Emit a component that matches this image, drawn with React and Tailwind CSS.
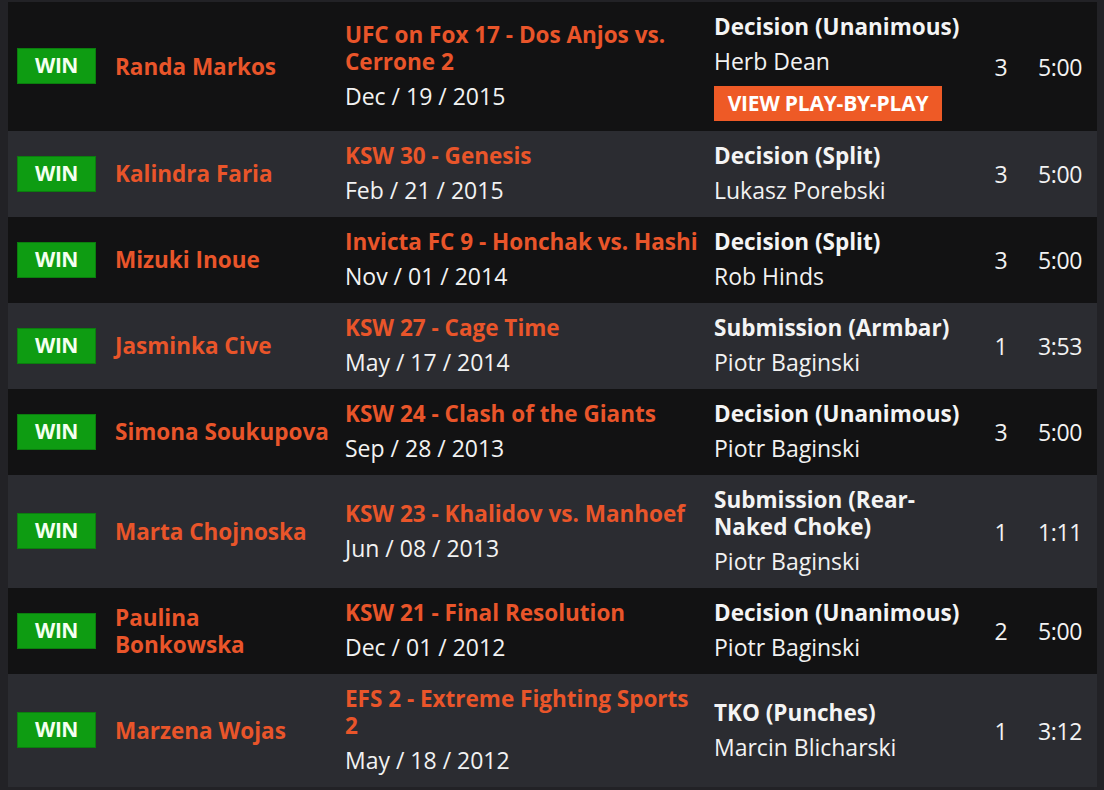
import React from "react";

const fights = [
  {
    opponent: "Randa Markos",
    event: "UFC on Fox 17 - Dos Anjos vs. Cerrone 2",
    date: "Dec / 19 / 2015",
    method: "Decision (Unanimous)",
    referee: "Herb Dean",
    round: 3,
    time: "5:00",
    playByPlay: true,
  },
  {
    opponent: "Kalindra Faria",
    event: "KSW 30 - Genesis",
    date: "Feb / 21 / 2015",
    method: "Decision (Split)",
    referee: "Lukasz Porebski",
    round: 3,
    time: "5:00",
  },
  {
    opponent: "Mizuki Inoue",
    event: "Invicta FC 9 - Honchak vs. Hashi",
    date: "Nov / 01 / 2014",
    method: "Decision (Split)",
    referee: "Rob Hinds",
    round: 3,
    time: "5:00",
  },
  {
    opponent: "Jasminka Cive",
    event: "KSW 27 - Cage Time",
    date: "May / 17 / 2014",
    method: "Submission (Armbar)",
    referee: "Piotr Baginski",
    round: 1,
    time: "3:53",
  },
  {
    opponent: "Simona Soukupova",
    event: "KSW 24 - Clash of the Giants",
    date: "Sep / 28 / 2013",
    method: "Decision (Unanimous)",
    referee: "Piotr Baginski",
    round: 3,
    time: "5:00",
  },
  {
    opponent: "Marta Chojnoska",
    event: "KSW 23 - Khalidov vs. Manhoef",
    date: "Jun / 08 / 2013",
    method: "Submission (Rear-Naked Choke)",
    referee: "Piotr Baginski",
    round: 1,
    time: "1:11",
  },
  {
    opponent: "Paulina Bonkowska",
    event: "KSW 21 - Final Resolution",
    date: "Dec / 01 / 2012",
    method: "Decision (Unanimous)",
    referee: "Piotr Baginski",
    round: 2,
    time: "5:00",
  },
  {
    opponent: "Marzena Wojas",
    event: "EFS 2 - Extreme Fighting Sports 2",
    date: "May / 18 / 2012",
    method: "TKO (Punches)",
    referee: "Marcin Blicharski",
    round: 1,
    time: "3:12",
  },
];

function FightRow({ fight, dark }) {
  return (
    <div
      className={
        "grid grid-cols-[107px_230px_369px_266px_42px_1fr] items-center pt-[11px] pb-[10px] " +
        (dark ? "bg-[#121213]" : "bg-[#2b2c31]")
      }
    >
      <div className="pl-[9px] -mt-[2px]">
        <div className="w-[79px] h-[36px] flex items-center justify-center bg-[#0e9c12] border border-[#0b7d0e] text-[#f4fff0] font-bold text-[21px] tracking-[-0.5px]">
          WIN
        </div>
      </div>
      <div className="pr-[14px] -mt-[2px] text-[#e9552a] font-bold text-[22.5px] leading-[27px]">
        {fight.opponent}
      </div>
      <div className="pr-[14px] flex flex-col gap-1">
        <div className="text-[#e9552a] font-bold text-[22.5px] leading-[27px]">
          {fight.event}
        </div>
        <div className="text-[#f2f2f2] font-medium text-[23px] leading-[34px]">
          {fight.date}
        </div>
      </div>
      <div className="pr-3 flex flex-col gap-1">
        <div className="text-[#f4f4f4] font-bold text-[22.5px] leading-[27px]">
          {fight.method}
        </div>
        <div className="text-[#f2f2f2] font-medium text-[23px] leading-[34px]">
          {fight.referee}
        </div>
        {fight.playByPlay && (
          <div className="mt-1 w-[228px] h-[35px] flex items-center justify-center bg-[#ee5a26] text-white font-bold text-[21px] uppercase tracking-[-0.2px]">
            View Play-by-Play
          </div>
        )}
      </div>
      <div className="text-center text-[#f2f2f2] font-medium text-[23px]">
        {fight.round}
      </div>
      <div className="pl-[16px] text-[#f2f2f2] font-medium text-[23px] tracking-[-0.4px]">
        {fight.time}
      </div>
    </div>
  );
}

export default function App() {
  return (
    <div
      className="w-[1104px] h-[790px] overflow-hidden bg-[#222226] pt-[2px] px-[8px] pr-[7px]"
      style={{ fontFamily: '"Open Sans", "Noto Sans", sans-serif' }}
    >
      <div className="flex flex-col">
        {fights.map((f, i) => (
          <FightRow key={f.opponent} fight={f} dark={i % 2 === 0} />
        ))}
      </div>
    </div>
  );
}
